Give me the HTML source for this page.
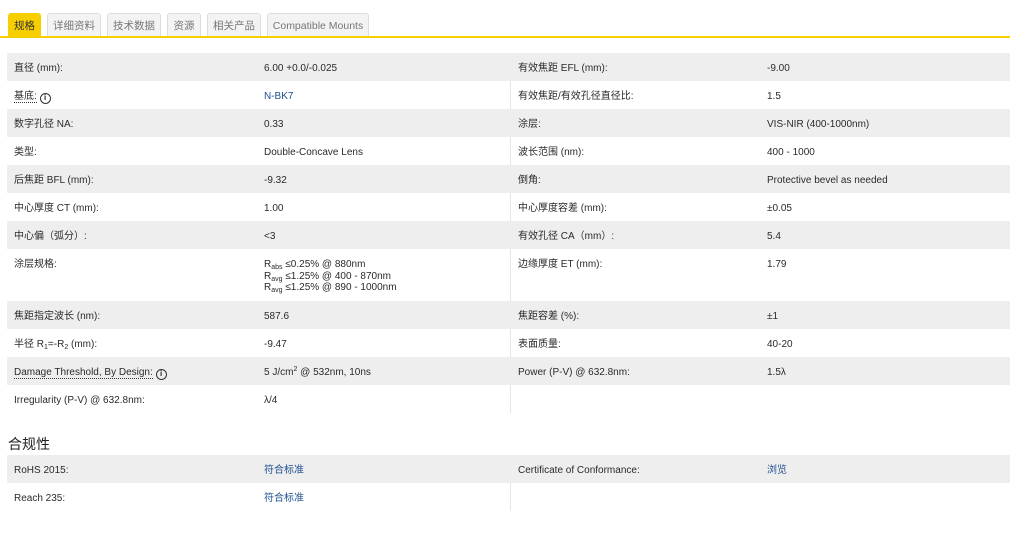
<!DOCTYPE html>
<html><head><meta charset="utf-8"><style>
*{margin:0;padding:0;box-sizing:border-box}
body{width:1010px;height:539px;background:#fff;font-family:"Liberation Sans","Noto Sans CJK SC",sans-serif;font-size:10px;color:#2a2a2a;position:relative;overflow:hidden}
.tab{position:absolute;top:13px;height:23px;border:1px solid #ddd;border-bottom:none;background:#f3f3f3;color:#777;font-size:10.5px;line-height:24px;text-align:center;border-radius:3px 3px 0 0}
.tab.a{background:#f7ce00;border-color:#f7ce00;color:#333}
.line{position:absolute;left:0;top:36px;width:1010px;height:2px;background:#f7ce00}
.r{position:absolute;left:7px;width:1003px;height:28px}
.g{background:#eeeeee}
.c{position:absolute;top:10px;white-space:nowrap;line-height:12px}
.c1{left:7px}.c2{left:257px}.c3{left:511px}.c4{left:760px}
.div{position:absolute;left:510px;width:1px;background:#e6e6e6}
a{color:#1d4f91;text-decoration:none}
.u{border-bottom:1px dotted #333}
.i{display:inline-block;width:11px;height:11px;border:1.5px solid #333;border-radius:50%;font-size:8px;line-height:8px;text-align:center;font-weight:bold;vertical-align:-1px}
sub{font-size:7px;vertical-align:-2px;line-height:0}
sup{font-size:7px;vertical-align:4px;line-height:0}
h2{position:absolute;left:8px;top:434px;font-size:14px;font-weight:normal;color:#222}
</style></head><body>
<div class="tab a" style="left:8px;width:33px">规格</div>
<div class="tab" style="left:47px;width:54px">详细资料</div>
<div class="tab" style="left:107px;width:54px">技术数据</div>
<div class="tab" style="left:167px;width:34px">资源</div>
<div class="tab" style="left:207px;width:54px">相关产品</div>
<div class="tab" style="left:267px;width:102px">Compatible Mounts</div>
<div class="line"></div>
<div class="div" style="top:53px;height:360px"></div>
<div class="r g" style="top:53px"><span class="c c1">直径 (mm):</span><span class="c c2">6.00 +0.0/-0.025</span><span class="c c3">有效焦距 EFL (mm):</span><span class="c c4">-9.00</span></div>
<div class="r" style="top:81px"><span class="c c1"><span class="u">基底:</span> <span class="i">i</span></span><span class="c c2"><a>N-BK7</a></span><span class="c c3">有效焦距/有效孔径直径比:</span><span class="c c4">1.5</span></div>
<div class="r g" style="top:109px"><span class="c c1">数字孔径 NA:</span><span class="c c2">0.33</span><span class="c c3">涂层:</span><span class="c c4">VIS-NIR (400-1000nm)</span></div>
<div class="r" style="top:137px"><span class="c c1">类型:</span><span class="c c2">Double-Concave Lens</span><span class="c c3">波长范围 (nm):</span><span class="c c4">400 - 1000</span></div>
<div class="r g" style="top:165px"><span class="c c1">后焦距 BFL (mm):</span><span class="c c2">-9.32</span><span class="c c3">倒角:</span><span class="c c4">Protective bevel as needed</span></div>
<div class="r" style="top:193px"><span class="c c1">中心厚度 CT (mm):</span><span class="c c2">1.00</span><span class="c c3">中心厚度容差 (mm):</span><span class="c c4">±0.05</span></div>
<div class="r g" style="top:221px"><span class="c c1">中心偏（弧分）:</span><span class="c c2">&lt;3</span><span class="c c3">有效孔径 CA（mm）:</span><span class="c c4">5.4</span></div>
<div class="r" style="top:249px;height:52px"><span class="c c1">涂层规格:</span><span class="c c2" style="line-height:11.5px">R<sub>abs</sub> ≤0.25% @ 880nm<br>R<sub>avg</sub> ≤1.25% @ 400 - 870nm<br>R<sub>avg</sub> ≤1.25% @ 890 - 1000nm</span><span class="c c3">边缘厚度 ET (mm):</span><span class="c c4">1.79</span></div>
<div class="r g" style="top:301px"><span class="c c1">焦距指定波长 (nm):</span><span class="c c2">587.6</span><span class="c c3">焦距容差 (%):</span><span class="c c4">±1</span></div>
<div class="r" style="top:329px"><span class="c c1">半径 R<sub>1</sub>=-R<sub>2</sub> (mm):</span><span class="c c2">-9.47</span><span class="c c3">表面质量:</span><span class="c c4">40-20</span></div>
<div class="r g" style="top:357px"><span class="c c1"><span class="u">Damage Threshold, By Design:</span> <span class="i">i</span></span><span class="c c2">5 J/cm<sup>2</sup> @ 532nm, 10ns</span><span class="c c3">Power (P-V) @ 632.8nm:</span><span class="c c4">1.5λ</span></div>
<div class="r" style="top:385px"><span class="c c1">Irregularity (P-V) @ 632.8nm:</span><span class="c c2">λ/4</span></div>
<h2>合规性</h2>
<div class="div" style="top:455px;height:56px"></div>
<div class="r g" style="top:455px"><span class="c c1">RoHS 2015:</span><span class="c c2"><a>符合标准</a></span><span class="c c3">Certificate of Conformance:</span><span class="c c4"><a>浏览</a></span></div>
<div class="r" style="top:483px"><span class="c c1">Reach 235:</span><span class="c c2"><a>符合标准</a></span></div>
</body></html>
